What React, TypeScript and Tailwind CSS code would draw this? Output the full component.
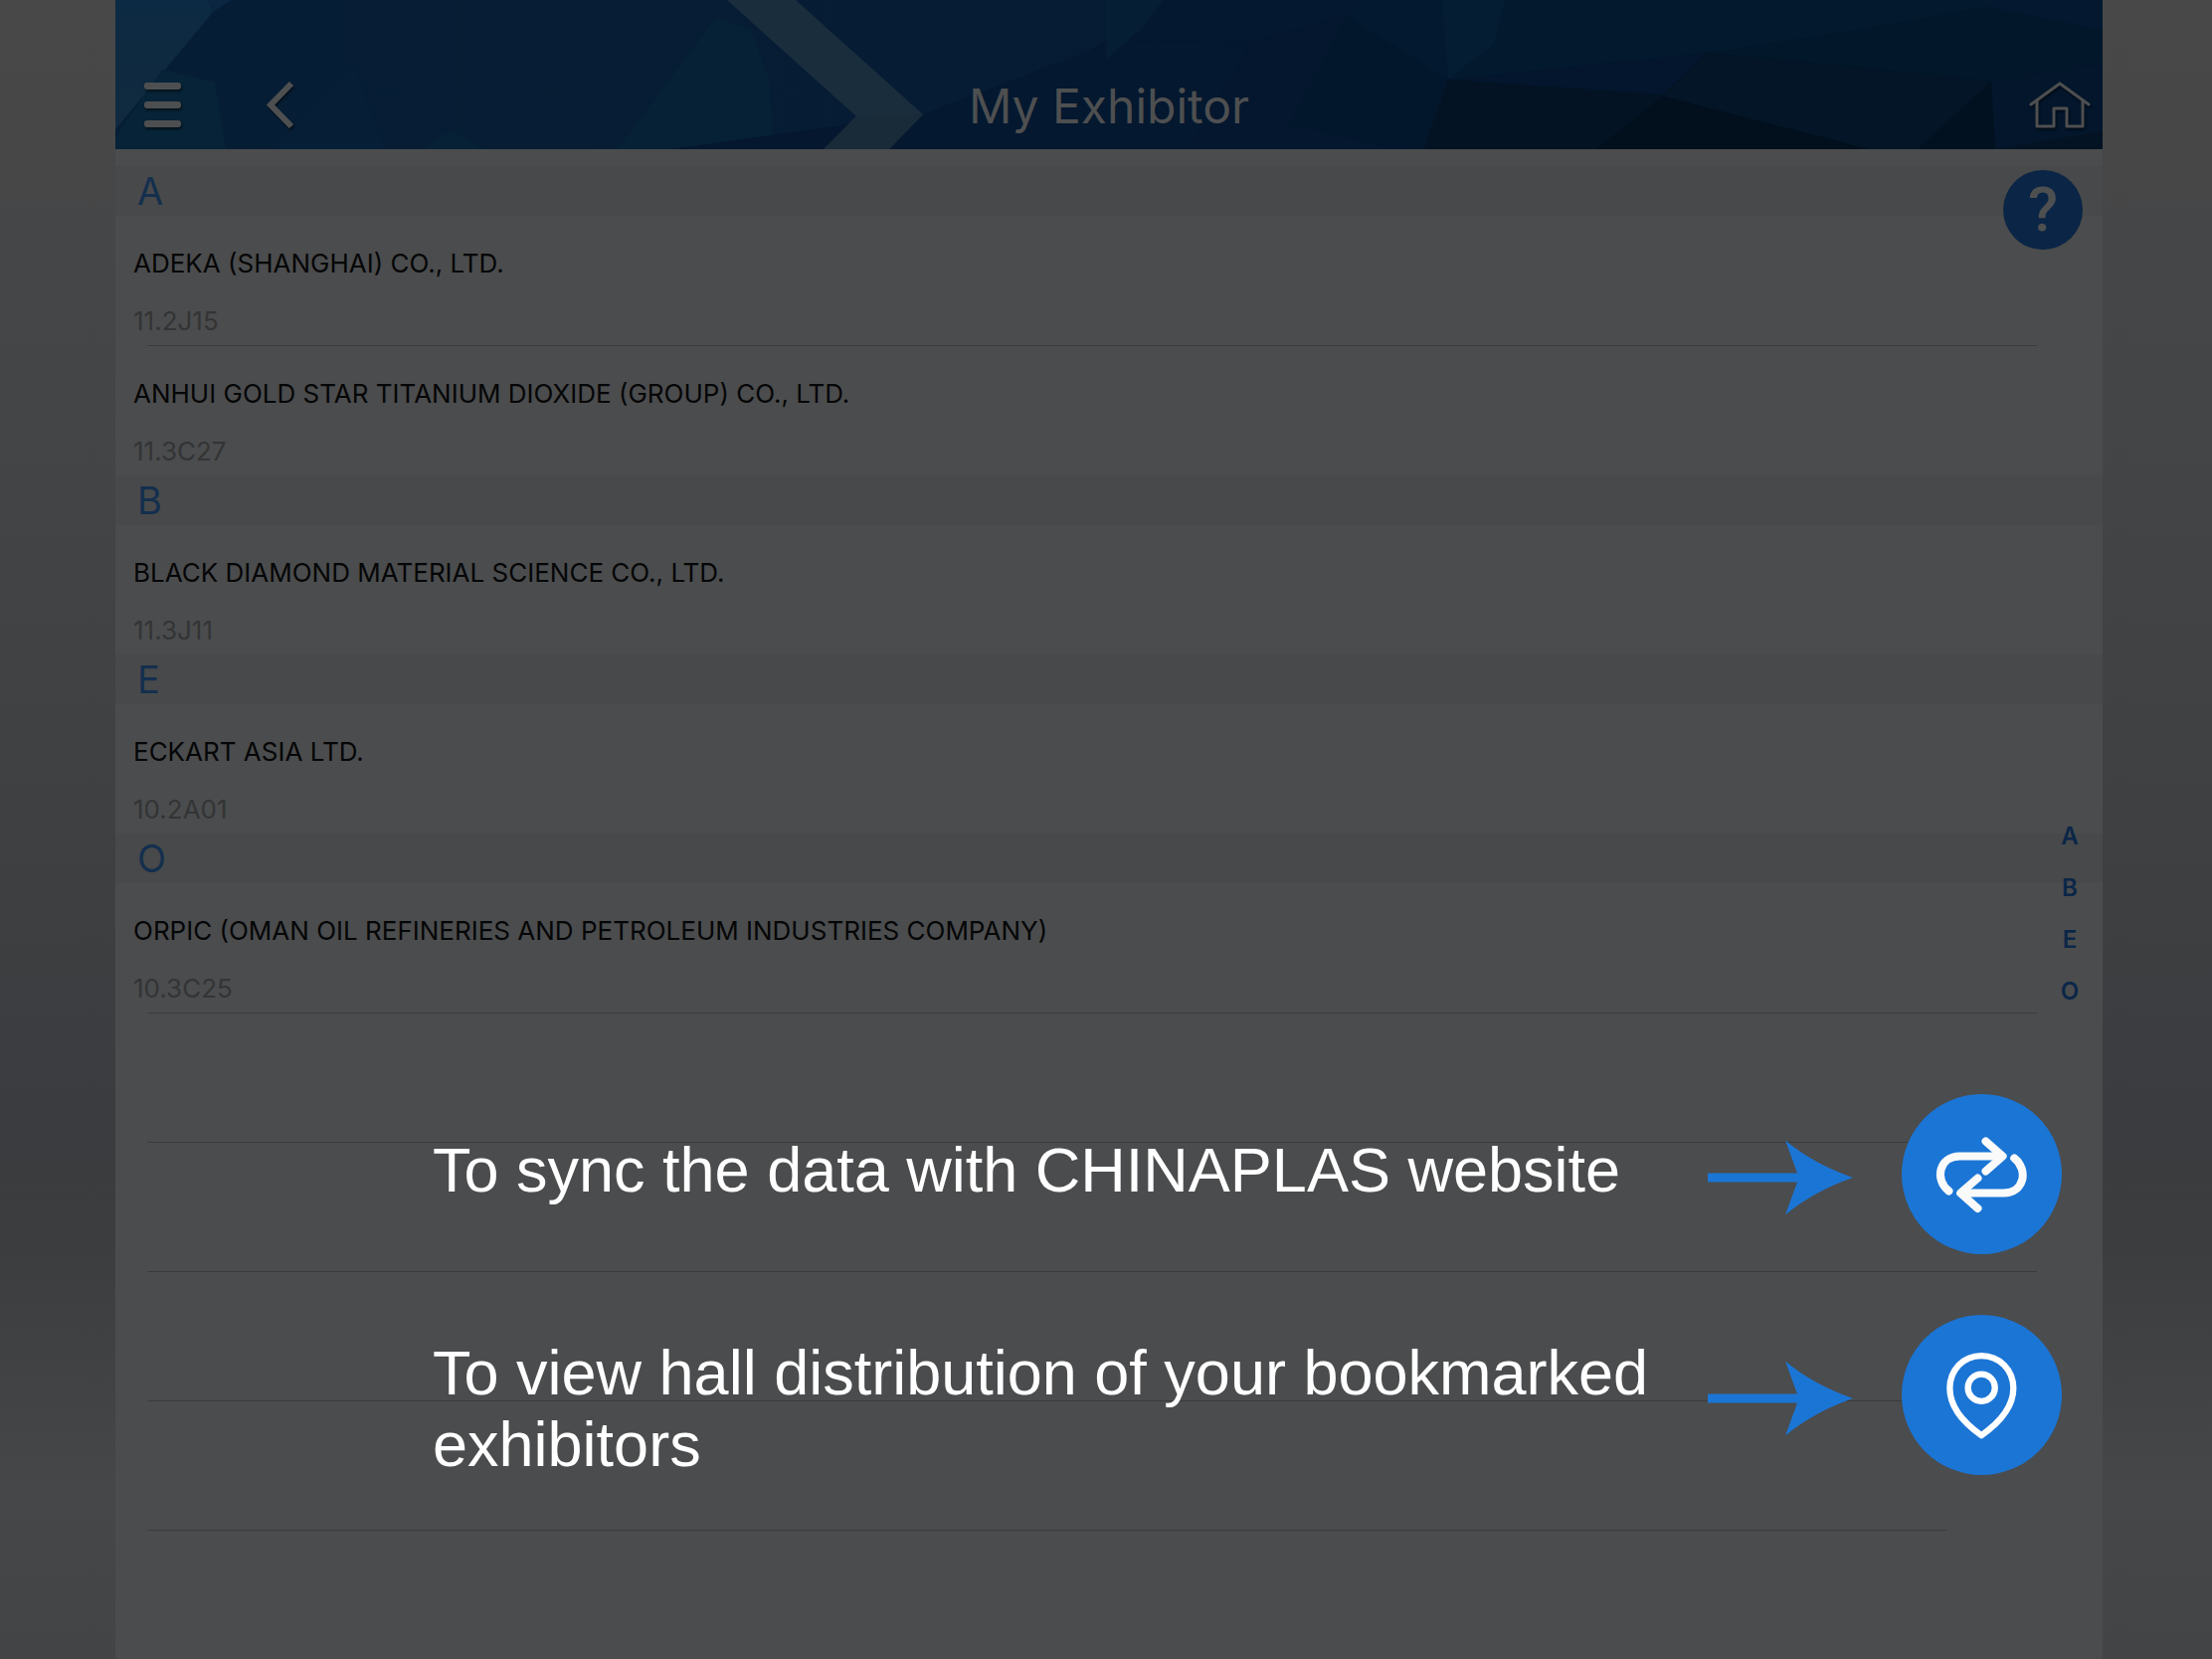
import React from "react";

type Exhibitor = { name: string; booth: string };
type Section = { letter: string; items: Exhibitor[] };

const sections: Section[] = [
  {
    letter: "A",
    items: [
      { name: "ADEKA (SHANGHAI) CO., LTD.", booth: "11.2J15" },
      { name: "ANHUI GOLD STAR TITANIUM DIOXIDE (GROUP) CO., LTD.", booth: "11.3C27" },
    ],
  },
  { letter: "B", items: [{ name: "BLACK DIAMOND MATERIAL SCIENCE CO., LTD.", booth: "11.3J11" }] },
  { letter: "E", items: [{ name: "ECKART ASIA LTD.", booth: "10.2A01" }] },
  {
    letter: "O",
    items: [{ name: "ORPIC (OMAN OIL REFINERIES AND PETROLEUM INDUSTRIES COMPANY)", booth: "10.3C25" }],
  },
];

function HeaderFacets() {
  return (
    <svg className="absolute inset-0 h-full w-full" viewBox="0 0 1998 150" preserveAspectRatio="none" aria-hidden="true">
      <defs>
        <linearGradient id="base" x1="0" y1="0" x2="1" y2="0">
          <stop offset="0" stopColor="#061e35" />
          <stop offset="0.45" stopColor="#061c34" />
          <stop offset="1" stopColor="#03162b" />
        </linearGradient>
        <linearGradient id="corner" x1="0" y1="0" x2="0" y2="1">
          <stop offset="0" stopColor="#0c2a43" />
          <stop offset="1" stopColor="#112a3e" />
        </linearGradient>
      </defs>
      <rect width="1998" height="150" fill="url(#base)" />
      <polygon points="240,66 270,150 160,150" fill="#061f37" />
      <polygon points="0,0 93,0 98,12 0,130" fill="url(#corner)" />
      <polygon points="93,0 117,0 98,12" fill="#0a2640" />
      <polygon points="0,138 47,70 100,83 111,150 0,150" fill="#072337" />
      <polygon points="338,130 370,150 310,150" fill="#062036" />
      <polygon points="604,17 639,30 657,78 662,150 505,150" fill="#062135" />
      <polygon points="558,150 812,115 877,108 1000,40 1160,0 1998,0 1998,150" fill="#04172e" />
      <polygon points="812,115 930,70 1010,40 1140,45 1080,150 760,150" fill="#04182f" />
      <polygon points="996,0 1054,0 1024,35 996,60" fill="#061e33" />
      <polygon points="1054,0 1260,0 1237,15 1140,42 1024,40" fill="#041930" />
      <polygon points="1237,15 1340,80 1316,150 1273,147 1180,125" fill="#03172c" />
      <polygon points="1260,0 1334,0 1340,80 1237,15" fill="#03192f" />
      <polygon points="1334,0 1397,0 1386,45 1340,80" fill="#051d33" />
      <polygon points="1397,0 1883,0 1883,7 1734,33 1599,53 1340,80 1386,45" fill="#031a2e" />
      <polygon points="1883,7 1998,30 1998,63 1886,82 1599,53 1734,33" fill="#03172a" />
      <polygon points="1883,0 1998,0 1998,30 1883,7" fill="#04192f" />
      <polygon points="1340,80 1599,53 1556,95" fill="#03162d" />
      <polygon points="1340,80 1556,95 1599,53 1886,82 1998,63 1998,150 1316,150" fill="#031323" />
      <polygon points="1599,53 1886,82 1812,150 1762,150 1556,97" fill="#031526" />
      <polygon points="1556,97 1762,150 1489,150" fill="#020f1c" />
      <polygon points="1886,82 1890,150 1812,150" fill="#021120" />
      <polygon points="1886,82 1998,63 1998,132 1890,150" fill="#03162b" />
      <polygon points="615,0 684,0 812,115 778,150 712,150 745,117" fill="#1a2d3c" />
      <polygon points="745,117 812,115 778,150 712,150" fill="#192b39" />
    </svg>
  );
}

function MenuIcon() {
  return (
    <svg className="h-[48px] w-[40px] drop-shadow-[1px_2px_1px_rgba(0,0,0,0.5)]" viewBox="0 0 40 48" fill="#4e4f50" aria-hidden="true">
      <rect x="1" y="2" width="37" height="7" rx="3" />
      <rect x="1" y="21" width="37" height="7" rx="3" />
      <rect x="1" y="40" width="37" height="7" rx="3" />
    </svg>
  );
}

function BackIcon() {
  return (
    <svg
      className="h-[48px] w-[30px] drop-shadow-[1px_2px_1px_rgba(0,0,0,0.5)]"
      viewBox="0 0 30 48"
      fill="none"
      stroke="#4e4f50"
      strokeWidth="6"
      aria-hidden="true"
    >
      <path d="M26 3 L5 24.500 L26 46" />
    </svg>
  );
}

function HomeIcon() {
  return (
    <svg
      className="h-[48px] w-[62px] drop-shadow-[1px_2px_1px_rgba(0,0,0,0.5)]"
      viewBox="0 0 62 48"
      fill="none"
      stroke="#4e4f50"
      strokeWidth="3"
      strokeLinejoin="round"
      strokeLinecap="round"
      aria-hidden="true"
    >
      <path d="M2 24 L31 3 L60 24" />
      <path d="M8 20 V46 H25 V28 H38 V46 H54 V20" />
    </svg>
  );
}

function PointerArrow() {
  return (
    <svg className="h-[76px] w-[146px] shrink-0" viewBox="0 0 146 76" fill="#1b75d5" aria-hidden="true">
      <path d="M0 33.500 H90 L78 0.500 Q106 24 146 38 Q106 52 78 75.500 L90 42.500 H0 Z" />
    </svg>
  );
}

function SyncIcon() {
  return (
    <svg
      className="h-full w-full"
      viewBox="0 0 482 482"
      fill="none"
      stroke="#fafafa"
      strokeWidth="24"
      strokeLinecap="round"
      strokeLinejoin="round"
      aria-hidden="true"
    >
      <path d="M142 292 C98 258 112 187 175 187 H300" />
      <path d="M253 142 L304 187 L253 232" />
      <path d="M339 193 C383 228 368 298 308 298 H182" />
      <path d="M229 344 L177 298 L229 253" />
      <path d="M282 168 L304 187 L282 206 Z M199 279 L177 298 L199 317 Z" strokeWidth="12" fill="#fafafa" />
    </svg>
  );
}

function PinIcon() {
  return (
    <svg
      className="h-full w-full"
      viewBox="0 0 486 486"
      fill="none"
      stroke="#ffffff"
      strokeWidth="19"
      strokeLinejoin="round"
      aria-hidden="true"
    >
      <path d="M242 124 C186 124 146 168 146 223 C146 280 188 328 242 366 C296 328 339 280 339 223 C339 168 298 124 242 124 Z" />
      <circle cx="242" cy="221" r="41" />
    </svg>
  );
}

function ExhibitorRow({ item, divider }: { item: Exhibitor; divider: boolean }) {
  return (
    <li>
      <div className="h-[130px] pl-[18px] pt-[30px]">
        <p className="text-[26px] leading-[36px] text-[#050607]">{item.name}</p>
        <p className="mt-[22px] text-[26px] leading-[36px] text-[#333435]">{item.booth}</p>
      </div>
      {divider && <Divider />}
    </li>
  );
}

function Divider({ short = false }: { short?: boolean }) {
  return <div className={short ? "ml-8 mr-[157px] h-px bg-[#3a3b3c]" : "ml-8 mr-[66px] h-px bg-[#3a3b3c]"} />;
}

function Hint({ lines, text, label, children }: { lines: 1 | 2; text: string; label: string; children: React.ReactNode }) {
  return (
    <div className="flex items-start">
      <p
        className={`${lines === 1 ? "pt-10" : "pt-[22px]"} flex-1 font-['Liberation_Sans',Arial,sans-serif] text-[63px] leading-[72px] text-white`}
      >
        {text}
      </p>
      <div className="flex h-[160px] items-center pt-2">
        <PointerArrow />
      </div>
      <button type="button" aria-label={label} className="ml-[49px] h-[161px] w-[161px] shrink-0 rounded-full bg-[#1b75d5]">
        {children}
      </button>
    </div>
  );
}

export default function App() {
  return (
    <div className="min-h-screen bg-[linear-gradient(to_bottom,#484849_0%,#444546_25%,#3f4042_50%,#3b3c3f_68%,#3c3d3e_75%,#464748_90%,#434445_100%)] pl-[116px] pr-[110px] font-[Inter,sans-serif]">
      <main className="relative min-h-screen bg-[#4b4c4d]">
        <header className="relative h-[150px]">
          <HeaderFacets />
          <div className="relative grid h-full grid-cols-[1fr_auto_1fr] items-center pt-[60px]">
            <div className="flex items-center gap-[83px] pl-7">
              <button type="button" aria-label="Menu">
                <MenuIcon />
              </button>
              <button type="button" aria-label="Back">
                <BackIcon />
              </button>
            </div>
            <h1 className="pt-1 text-[48px] leading-[60px] text-[#4e4f50]">My Exhibitor</h1>
            <div className="flex justify-end pr-3">
              <button type="button" aria-label="Home">
                <HomeIcon />
              </button>
            </div>
          </div>
        </header>

        <div className="pt-[17px]">
          {sections.map((section, s) => (
            <section key={section.letter} id={section.letter}>
              <h2 className="h-[50px] bg-[#48494a] pl-[22px] text-[38px] leading-[50px] text-[#142f4e]">{section.letter}</h2>
              <ul>
                {section.items.map((item, i) => (
                  <ExhibitorRow
                    key={item.booth}
                    item={item}
                    divider={i < section.items.length - 1 || s === sections.length - 1}
                  />
                ))}
              </ul>
            </section>
          ))}
          {[0, 1, 2, 3].map((n) => (
            <div key={n} className="flex h-[130px] flex-col justify-end">
              <Divider short={n === 3} />
            </div>
          ))}
        </div>

        <button
          type="button"
          aria-label="Help"
          className="absolute right-5 top-[171px] h-20 w-20 rounded-full bg-[#0a2545] text-center font-[Roboto,sans-serif] text-[62px] font-medium leading-[80px] text-[#4e4f50]"
        >
          ?
        </button>

        <nav aria-label="Alphabet index" className="absolute right-[13px] top-[815px] flex w-10 flex-col text-center">
          {sections.map((section) => (
            <a key={section.letter} href={`#${section.letter}`} className="text-[24px] font-semibold leading-[52px] text-[#0b2648]">
              {section.letter}
            </a>
          ))}
        </nav>

        <div className="absolute inset-x-0 top-[1100px] flex flex-col gap-[61px] pl-[319px] pr-[41px]">
          <Hint lines={1} text="To sync the data with CHINAPLAS website" label="Sync">
            <SyncIcon />
          </Hint>
          <Hint lines={2} text="To view hall distribution of your bookmarked exhibitors" label="Hall map">
            <PinIcon />
          </Hint>
        </div>
      </main>
    </div>
  );
}
